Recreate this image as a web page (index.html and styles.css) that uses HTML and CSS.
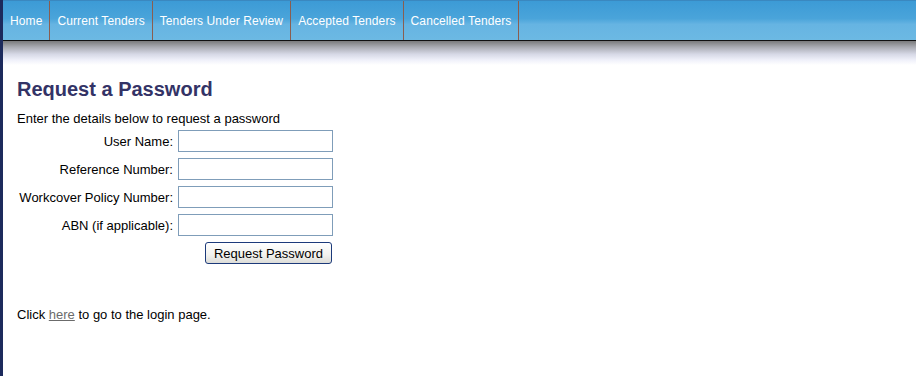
FILE: index.html
```html
<!DOCTYPE html>
<html lang="en">
<head>
<meta charset="UTF-8" />
<title>Request a Password</title>
<link rel="stylesheet" href="styles.css">
</head>
<body>
<div class="page">
  <!-- top menu -->
  <div class="menu">
    <a href="#" class="menu-item">Home</a>
    <a href="#" class="menu-item">Current Tenders</a>
    <a href="#" class="menu-item">Tenders Under Review</a>
    <a href="#" class="menu-item">Accepted Tenders</a>
    <a href="#" class="menu-item">Cancelled Tenders</a>
  </div>
  <div class="menu-shadow"></div>

  <div class="content">
    <h1>Request a Password</h1>
    <p class="intro">Enter the details below to request a password</p>

    <form class="request-form" onsubmit="return false;">
      <label for="userName">User Name:</label>
      <input type="text" id="userName" />

      <label for="refNumber">Reference Number:</label>
      <input type="text" id="refNumber" />

      <label for="policyNumber">Workcover Policy Number:</label>
      <input type="text" id="policyNumber" />

      <label for="abn">ABN (if applicable):</label>
      <input type="text" id="abn" />

      <span></span>
      <div class="actions">
        <button type="submit" class="btn">Request Password</button>
      </div>
    </form>

    <p class="login-link">Click <a href="#">here</a> to go to the login page.</p>
  </div>
</div>
</body>
</html>
```

FILE: styles.css
```css
/* common */
*, *::before, *::after {
  box-sizing: border-box;
}
html, body {
  margin: 0;
  padding: 0;
  height: 100%;
}
body {
  font-family: "Liberation Sans", Arial, sans-serif;
  font-size: 13px;
  color: #000;
  background: #fff;
}
.page {
  min-height: 100%;
  border-left: 3px solid #1c2a5c;
}

/* menu */
.menu {
  display: flex;
  height: 41px;
  background: linear-gradient(#3c9bd6 0%, #4aa4da 45%, #66b4e2 60%, #6cb9e3 100%);
  border-top: 1px solid #3a88c0;
  border-bottom: 1px solid #111;
  font-size: 12px;
  letter-spacing: 0.1px;
}
.menu-item {
  display: flex;
  align-items: center;
  padding: 1px 7px 0 7px;
  color: #fff;
  text-decoration: none;
  border-right: 1px solid #8a5e50;
}
.menu-shadow {
  height: 24px;
  background: linear-gradient(#7a7b7c 0%, #a9abb2 25%, #d6d8e6 55%, #f0f1fa 80%, #fff 100%);
}

/* content */
.content {
  padding: 0 14px;
}
h1 {
  margin: 12px 0 0;
  font-size: 20px;
  font-weight: bold;
  color: #333366;
  line-height: 24px;
}
.intro {
  margin: 10px 0 0;
  line-height: 15px;
}

.request-form {
  display: grid;
  grid-template-columns: 156px 155px;
  column-gap: 5px;
  row-gap: 6px;
  margin-top: 4px;
  align-items: center;
}
.request-form label {
  text-align: right;
  white-space: nowrap;
}
.request-form input[type="text"] {
  width: 155px;
  height: 22px;
  margin: 0;
  padding: 2px 3px;
  border: 1px solid #7f9db9;
  font-family: inherit;
  font-size: 13px;
}
.actions {
  display: flex;
  justify-content: flex-end;
  padding-right: 1px;
}
.btn {
  height: 22px;
  padding: 0 8px;
  font-family: inherit;
  font-size: 13px;
  color: #000;
  border: 1px solid #1c3a7a;
  border-radius: 3px;
  background: linear-gradient(#ffffff 0%, #f2f2ee 60%, #dcdcd8 100%);
  cursor: pointer;
}

.login-link {
  margin: 43px 0 0;
  line-height: 15px;
}
.login-link a {
  color: #6b6b6b;
}
```
